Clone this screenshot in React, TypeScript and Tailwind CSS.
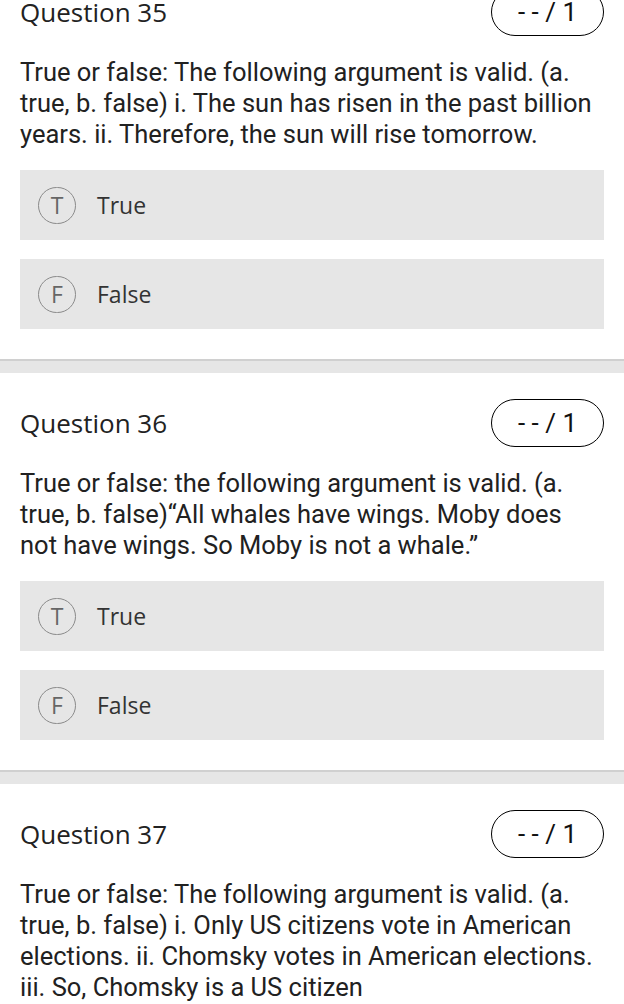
import React from 'react';

interface Question {
  number: number;
  text: string;
  options?: { letter: string; label: string }[];
}

const tf = [
  { letter: 'T', label: 'True' },
  { letter: 'F', label: 'False' },
];

const questions: Question[] = [
  {
    number: 35,
    text: 'True or false: The following argument is valid. (a. true, b. false) i. The sun has risen in the past billion years. ii. Therefore, the sun will rise tomorrow.',
    options: tf,
  },
  {
    number: 36,
    text: 'True or false: the following argument is valid. (a. true, b. false)\u201CAll whales have wings. Moby does not have wings. So Moby is not a whale.\u201D',
    options: tf,
  },
  {
    number: 37,
    text: 'True or false: The following argument is valid. (a. true, b. false) i. Only US citizens vote in American elections. ii. Chomsky votes in American elections. iii. So, Chomsky is a US citizen',
    options: tf,
  },
];

function QuestionBlock({ q, last }: { q: Question; last: boolean }) {
  return (
    <section>
      <div className="px-5 pt-[26px]">
        <div className="flex items-center justify-between h-[48px]">
          <h2 className="text-[26px] font-medium text-[#222] font-['Open_Sans',sans-serif]">Question {q.number}</h2>
          <div className="w-[113px] h-[48px] rounded-full border-[1.5px] border-black flex items-center justify-center text-[26px] text-[#111] font-['Roboto',sans-serif]">
            - - / 1
          </div>
        </div>
        <p className="mt-[21px] mr-[2px] text-[25.5px] leading-[31px] text-[#212121] font-['Roboto',sans-serif]">{q.text}</p>
        <div className="mt-[20px] flex flex-col gap-[19px]">
          {q.options?.map((o) => (
            <div key={o.letter} className="h-[70px] bg-[#e6e6e6] flex items-center pl-[18px]">
              <div className="w-[38px] h-[37px] rounded-full border border-[#8a8a8a] flex items-center justify-center text-[23px] font-medium text-[#666] font-['Open_Sans',sans-serif]">
                {o.letter}
              </div>
              <span className="ml-[21px] text-[23px] text-[#333] font-['Open_Sans',sans-serif]">{o.label}</span>
            </div>
          ))}
        </div>
      </div>
      {!last && <div className="mt-[30px] h-[14px] border-t-2 border-[#d0d0d0] bg-[#e6e6e6]" />}
    </section>
  );
}

export default function App() {
  return (
    <div className="w-[624px] h-[1004px] overflow-hidden bg-white">
      <div className="-mt-[38px]">
        {questions.map((q, i) => (
          <QuestionBlock key={q.number} q={q} last={i === questions.length - 1} />
        ))}
      </div>
    </div>
  );
}
